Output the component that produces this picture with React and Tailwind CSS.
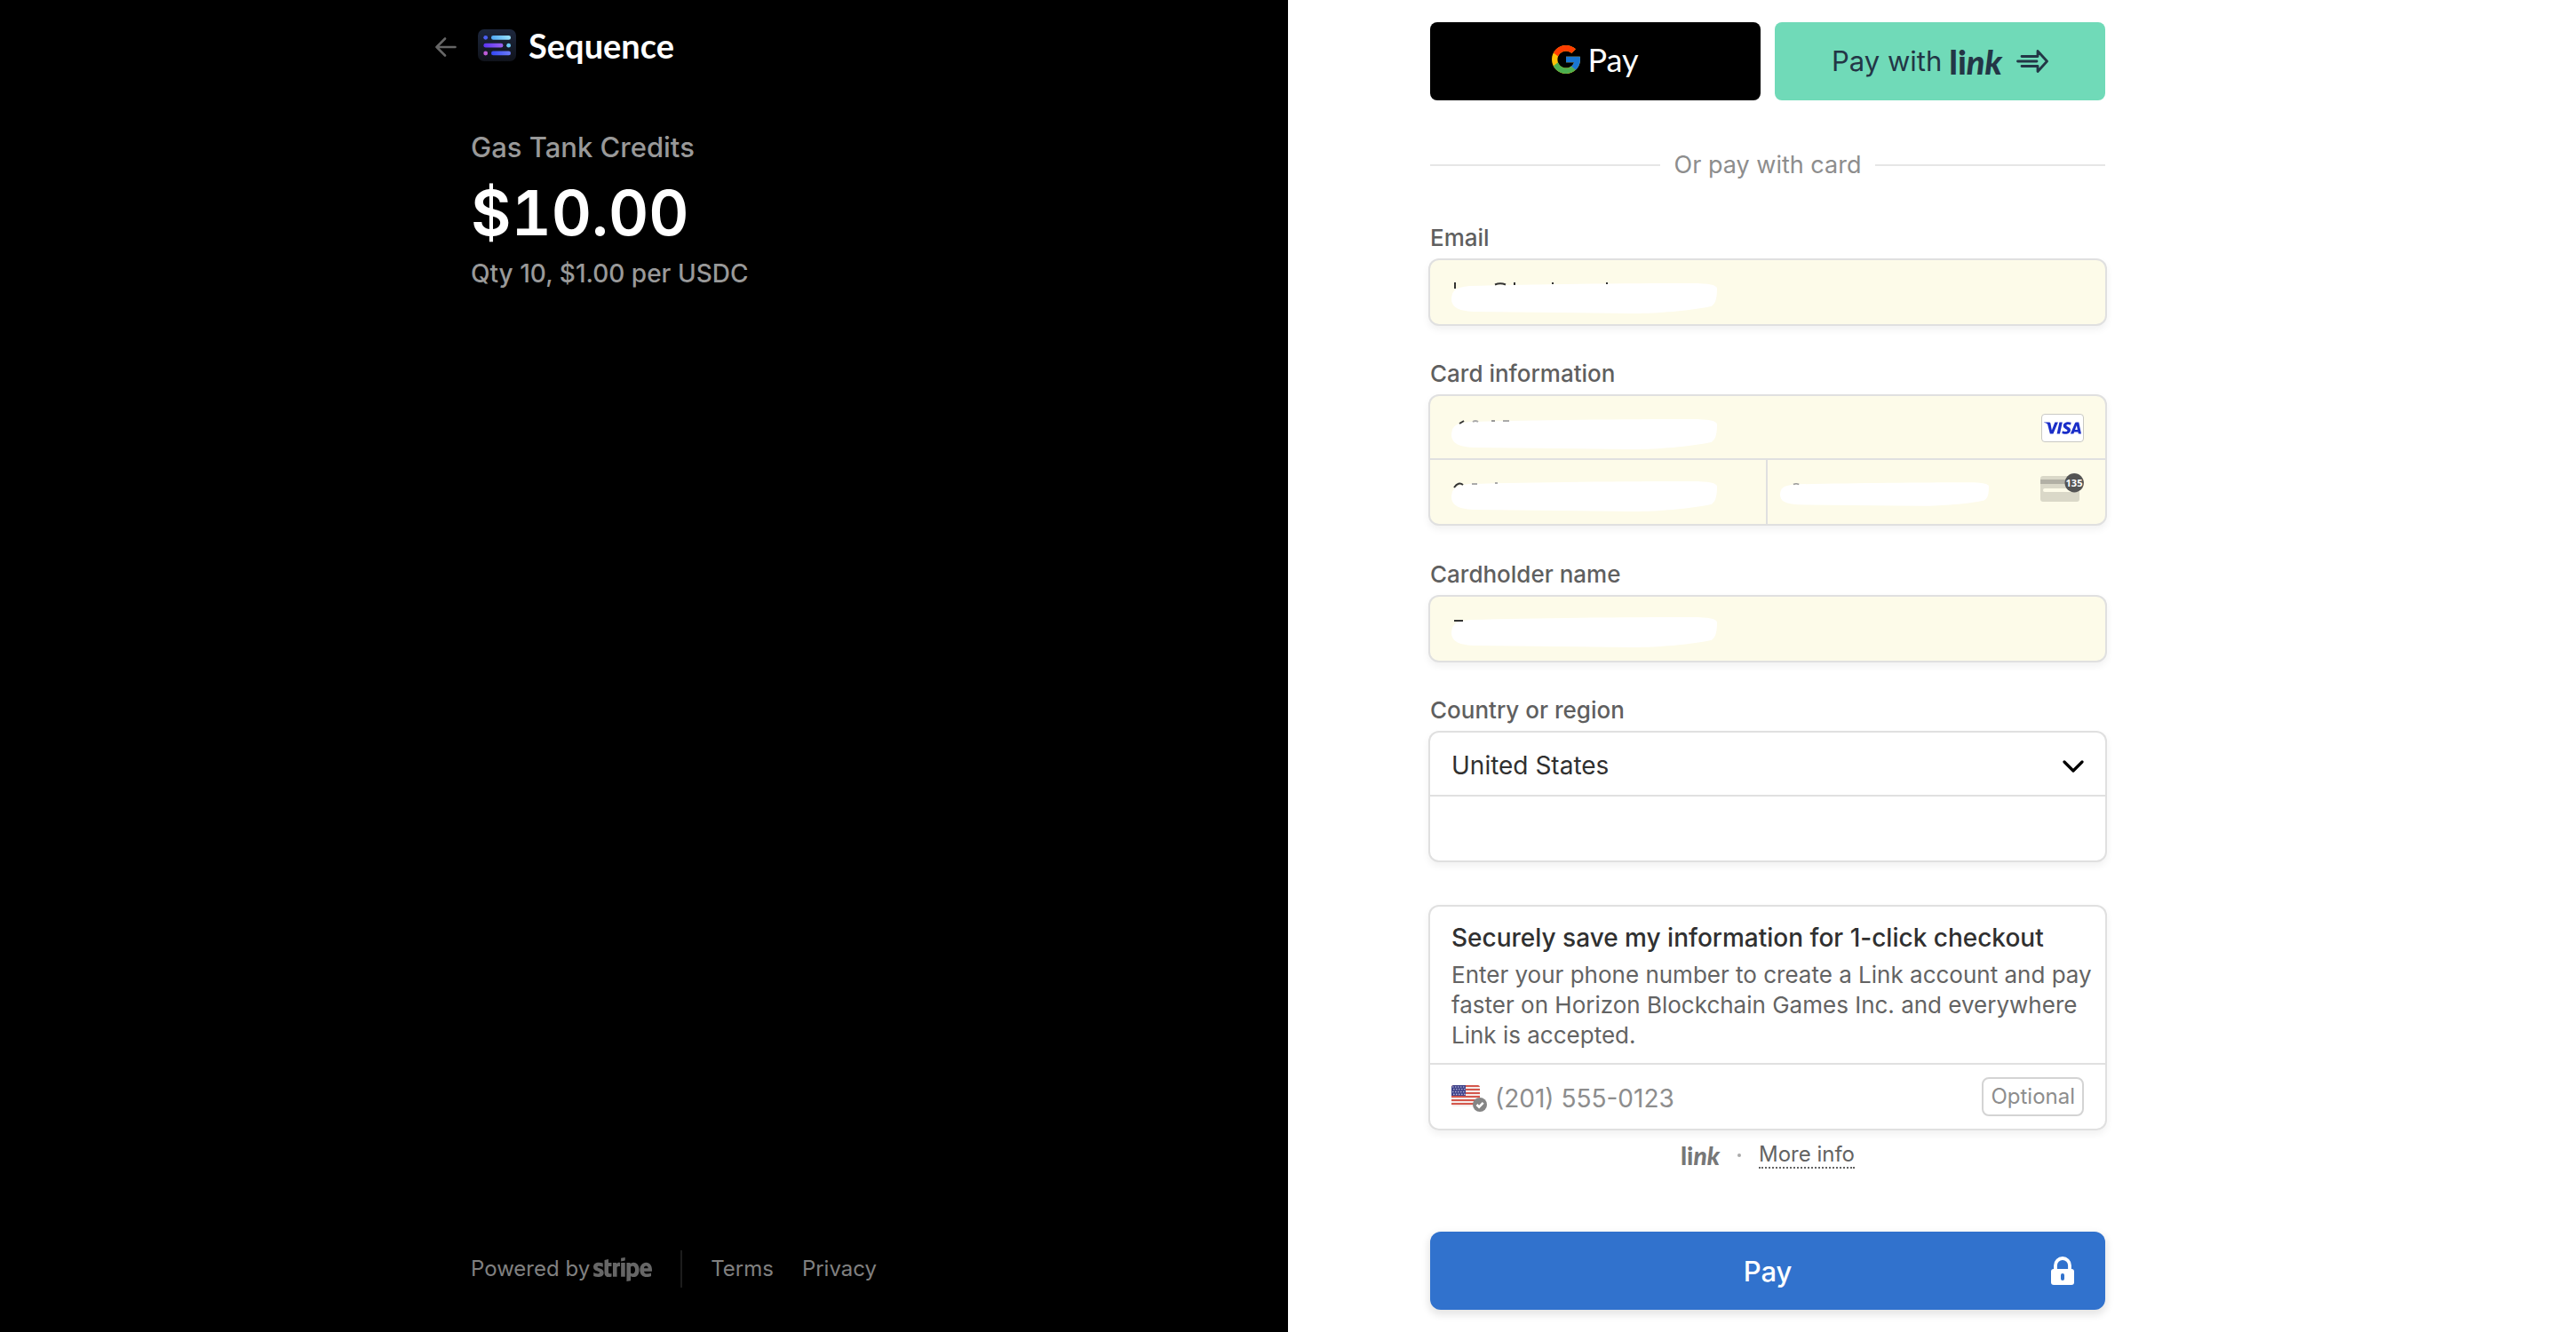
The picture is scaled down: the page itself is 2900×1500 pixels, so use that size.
import React from "react";
import { FcGoogle } from "react-icons/fc";
import { FaStripe } from "react-icons/fa";
import { SiVisa } from "react-icons/si";

const field =
  "h-full w-full bg-transparent px-6 pt-1 text-[28px] text-[#303030] outline-none placeholder:text-[#8d8d8d]";
const box =
  "rounded-[10px] ring-2 ring-[#e0e0e0] shadow-[0_4px_8px_2px_rgba(0,0,0,0.06)]";

function Smudge({ className, marks }) {
  return (
    <svg viewBox="0 0 299 34" className={className} fill="none" aria-hidden="true">
      <path
        fill="#fff"
        d="M0 17C1 8 4 5 20 3C90 1 200 0 270 0C290 0 299 2 299 6C299 20 296 24 292 26C270 31 230 34 205 34L25 32C6 31 0 26 0 17Z"
      />
      {marks.map(([d, color], i) => (
        <path key={i} d={d} stroke={color} strokeWidth="2" />
      ))}
    </svg>
  );
}

const smudgeWide = "pointer-events-none absolute left-6 h-[34px] w-[299px] overflow-visible";

function SequenceMark() {
  return (
    <svg viewBox="0 0 43 36" className="h-9 w-[43px]" aria-hidden="true">
      <defs>
        <linearGradient id="bg" x1="0" y1="0" x2="0" y2="1">
          <stop stopColor="#1d273d" />
          <stop offset="1" stopColor="#10131b" />
        </linearGradient>
        <linearGradient id="a"><stop stopColor="#4fa8f7" /><stop offset="1" stopColor="#9be4fb" /></linearGradient>
        <linearGradient id="b"><stop stopColor="#5a35f5" /><stop offset="1" stopColor="#9a62f0" /></linearGradient>
        <linearGradient id="c"><stop stopColor="#3347f5" /><stop offset="1" stopColor="#6c7cf5" /></linearGradient>
      </defs>
      <rect width="43" height="36" rx="7" fill="url(#bg)" />
      <circle cx="8.7" cy="9.3" r="2.4" fill="#4a5ff3" />
      <rect x="15" y="7" width="22" height="4.7" rx="2.3" fill="url(#a)" />
      <rect x="6.4" y="15.8" width="22" height="4.7" rx="2.3" fill="url(#b)" />
      <circle cx="34.6" cy="18.2" r="2.4" fill="#6cc8f5" />
      <circle cx="8.7" cy="27" r="2.4" fill="#bd5bd8" />
      <rect x="15" y="24.6" width="22" height="4.7" rx="2.3" fill="url(#c)" />
    </svg>
  );
}

function CvcIcon() {
  return (
    <svg viewBox="0 0 49 32" className="h-8 w-[49px]" aria-hidden="true">
      <rect y="3" width="44" height="29" rx="3" fill="#dad8c8" />
      <rect y="7" width="44" height="5" fill="#b2b0a5" />
      <rect x="3" y="17" width="38" height="4" rx="2" fill="#fdfbe9" />
      <circle cx="38.2" cy="10.7" r="10.7" fill="#545454" />
      <text x="38" y="15" textAnchor="middle" fontSize="11" fontWeight="700" fill="#fff" fontFamily="Open Sans, sans-serif">
        135
      </text>
    </svg>
  );
}

function Flag() {
  const dots = [];
  for (let r = 0; r < 4; r++)
    for (let c = 0; c < 5; c++) dots.push([1.8 + c * 3 + (r % 2 ? 1 : 0), 2 + r * 2.8]);
  return (
    <svg viewBox="0 0 41 31" className="mt-1 h-[31px] w-[41px] shrink-0" aria-hidden="true">
      <clipPath id="fl"><rect width="32" height="24" rx="2.5" /></clipPath>
      <g clipPath="url(#fl)">
        <rect width="32" height="24" fill="#f6ecea" />
        {[0, 4, 8, 12, 16, 20].map((y) => (
          <rect key={y} y={y} width="32" height="2" fill="#d4574c" />
        ))}
        <rect width="16" height="12" fill="#40438a" />
        {dots.map(([x, y], i) => (
          <circle key={i} cx={x} cy={y} r=".8" fill="#b9bbdc" />
        ))}
      </g>
      <circle cx="32" cy="22" r="8" fill="#858585" />
      <path d="M28.5 22l2.6 2.6 4.6-4.8" fill="none" stroke="#fff" strokeWidth="2.6" />
    </svg>
  );
}

function Label({ htmlFor, children }) {
  return (
    <label htmlFor={htmlFor} className="mb-2 block text-[26px] leading-[34px] font-medium text-[#5f5f5f]">
      {children}
    </label>
  );
}

export default function App() {
  return (
    <div className="grid min-h-screen grid-cols-2 bg-white font-['Inter',sans-serif]">
      <section className="flex justify-end bg-black pr-40 text-[#999]">
        <div className="flex w-full max-w-[760px] flex-col">
          <header className="-ml-10 flex h-[102px] items-center">
            <button type="button" aria-label="Back" className="mt-1 mr-6">
              <svg viewBox="0 0 24 22" className="h-[22px] w-6" fill="none" stroke="#666" strokeWidth="2.6" strokeLinecap="round" strokeLinejoin="round">
                <path d="M22.500 11H1.500M11 1.500L1.500 11L11 20.500" />
              </svg>
            </button>
            <SequenceMark />
            <span className="ml-[14px] font-['Lato'] text-[38px] leading-[48px] font-bold text-white">Sequence</span>
          </header>
          <main className="mt-11">
            <h1 className="text-[31px] leading-10 font-medium">Gas Tank Credits</h1>
            <p className="mt-2.5 text-[70px] leading-[88px] font-semibold text-white tabular-nums">$10.00</p>
            <p className="mt-1 text-[28px] leading-10 font-medium">Qty 10, $1.00 per USDC</p>
          </main>
          <footer className="mt-auto mb-[50px] flex h-[42px] items-center text-2xl text-[#808080]">
            <a href="#stripe" className="flex items-center gap-1">
              Powered by
              <FaStripe aria-label="stripe" viewBox="0 96 640 320" className="h-[33px] w-[66px] text-[#666]" />
            </a>
            <span className="mx-8 h-full w-0.5 bg-[#1c1c1c]" />
            <a href="#terms">Terms</a>
            <a href="#privacy" className="ml-8">Privacy</a>
          </footer>
        </div>
      </section>

      <section className="pt-[25px] pl-40">
        <form className="w-full max-w-[760px]">
          <div className="grid h-[88px] grid-cols-2 gap-4">
            <button type="button" className="flex items-center justify-center gap-2 rounded-lg bg-black pb-1 text-white">
              <FcGoogle viewBox="4 4 40 40" className="h-8 w-8" />
              <span className="font-['Lato'] text-[36px] leading-[44px]">Pay</span>
            </button>
            <button type="button" className="flex items-center justify-center rounded-lg bg-[#70dab8] text-[31px] text-[#233646]">
              Pay with
              <span className="ml-2 font-['Lato'] text-[38px] leading-[44px] font-black">li<i>nk</i></span>
              <svg viewBox="0 0 36 26" className="ml-4 h-[26px] w-9" fill="none" stroke="currentColor" strokeWidth="2.800" strokeLinecap="round" strokeLinejoin="round" aria-hidden="true">
                <path d="M6 7.500H24V1.500L34.500 13L24 24.500V18.500H6M1.500 13H23" />
              </svg>
            </button>
          </div>

          <div className="mt-[54px] mb-[46px] flex items-center gap-4 text-[27px] leading-[38px] text-[#8d8d8d]">
            <span className="h-0.5 flex-1 bg-[#e6e6e6]" />
            Or pay with card
            <span className="h-0.5 flex-1 bg-[#e6e6e6]" />
          </div>

          <Label htmlFor="email">Email</Label>
          <div className={box + " relative h-[72px] bg-[#fdfbe9]"}>
            <input id="email" type="email" className={field} />
            <Smudge
              className={smudgeWide + " top-[26px]"}
              marks={[["M4 -1V6", "#333"], ["M49 1.500Q55 -1 61 1.500", "#333"], ["M71 -1V2M114 -1V1M175 -1V1", "#333"]]}
            />
          </div>

          <div className="mt-[39px]">
            <Label htmlFor="card">Card information</Label>
            <div className={box + " bg-[#fdfbe9]"}>
              <div className="relative flex h-[72px] items-center border-b-2 border-[#e0e0e0] pr-6">
                <input id="card" type="text" className={field} />
                <span className="mt-0.5 flex h-8 w-12 shrink-0 items-center justify-center rounded border border-[#c9c9c4] bg-white">
                  <SiVisa viewBox="0 8 24 8" className="h-[14px] w-[42px] text-[#1a2ec8]" aria-label="Visa" />
                </span>
                <Smudge
                  className={smudgeWide + " top-[26px]"}
                  marks={[["M9 5L14 2", "#333"], ["M24 3Q27 1 30 3M58 2H65", "#aaa"], ["M45 2H49", "#999"]]}
                />
              </div>
              <div className="grid h-[72px] grid-cols-2">
                <div className="relative border-r-2 border-[#e0e0e0]">
                  <input aria-label="Expiration" type="text" className={field} />
                  <Smudge
                    className={smudgeWide + " top-6"}
                    marks={[["M3 7Q8 0 13 4", "#333"], ["M23 3H29M49 2H52", "#aaa"]]}
                  />
                </div>
                <div className="relative flex items-start pr-6">
                  <input aria-label="CVC" type="text" className={field} />
                  <span className="mt-[15px] shrink-0"><CvcIcon /></span>
                  <Smudge
                    className="pointer-events-none absolute top-[25px] left-[14px] h-[27px] w-[235px] overflow-visible"
                    marks={[["M19 3Q23 1 27 3", "#999"]]}
                  />
                </div>
              </div>
            </div>
          </div>

          <div className="mt-10">
            <Label htmlFor="name">Cardholder name</Label>
            <div className={box + " relative h-[72px] bg-[#fdfbe9]"}>
              <input id="name" type="text" className={field} />
              <Smudge className={smudgeWide + " top-[23px]"} marks={[["M4 5V4H13", "#333"]]} />
            </div>
          </div>

          <div className="mt-[39px]">
            <Label htmlFor="country">Country or region</Label>
            <div className={box + " bg-white"}>
              <div className="relative h-[72px] border-b-2 border-[#e0e0e0]">
                <select id="country" className={field + " appearance-none"}>
                  <option>United States</option>
                </select>
                <svg viewBox="0 0 24 14" className="pointer-events-none absolute top-[31px] right-6 h-[14px] w-6" fill="none" stroke="#000" strokeWidth="3.200" strokeLinecap="round" strokeLinejoin="round">
                  <path d="M2 2L12 12L22 2" />
                </svg>
              </div>
              <div className="h-[72px]">
                <input aria-label="ZIP" type="text" className={field} />
              </div>
            </div>
          </div>

          <div className={box + " mt-[52px] bg-white"}>
            <div className="h-[178px] border-b-2 border-[#e0e0e0] pt-4 pr-3 pl-6">
              <h2 className="text-[28px] leading-[38px] font-medium text-[#303030]">Securely save my information for 1-click checkout</h2>
              <p className="mt-1.5 text-[26px] leading-[34px] text-[#636363]">
                Enter your phone number to create a Link account and pay faster on Horizon Blockchain Games Inc. and everywhere Link is accepted.
              </p>
            </div>
            <div className="flex h-[72px] items-center px-6">
              <Flag />
              <input aria-label="Phone number" type="tel" placeholder="(201) 555-0123" className="h-full min-w-0 flex-1 bg-transparent pt-1 pl-2 text-[28px] outline-none placeholder:text-[#8d8d8d]" />
              <span className="flex h-11 items-center rounded-lg border-2 border-[#d4d4d4] px-2 text-2xl text-[#8d8d8d]">Optional</span>
            </div>
          </div>

          <div className="mt-[13px] flex h-[34px] items-center justify-center text-2xl leading-[28px] text-[#636363]">
            <span className="font-['Lato'] text-[28px] font-black text-[#777]">li<i>nk</i></span>
            <span className="mx-5 h-1 w-1 rounded-full bg-[#aaa]" />
            <a href="#more" className="border-b-2 border-dotted border-[#636363]">More info</a>
          </div>

          <button type="submit" className="relative mt-[69px] h-[88px] w-full rounded-xl bg-[#3172cd] pt-0.5 text-[31px] font-medium text-white shadow-[0_4px_8px_2px_rgba(0,0,0,0.1)]">
            Pay
            <svg viewBox="0 0 26 32" className="absolute top-7 right-[35px] h-8 w-[26px]" fill="none" aria-hidden="true">
              <path d="M5 16V10A8 8 0 0 1 21 10V16" stroke="#fff" strokeWidth="3.800" />
              <rect y="14" width="26" height="18" rx="3" fill="#fff" />
              <rect x="11" y="19" width="4" height="8" rx="2" fill="#3172cd" />
            </svg>
          </button>
        </form>
      </section>
    </div>
  );
}
